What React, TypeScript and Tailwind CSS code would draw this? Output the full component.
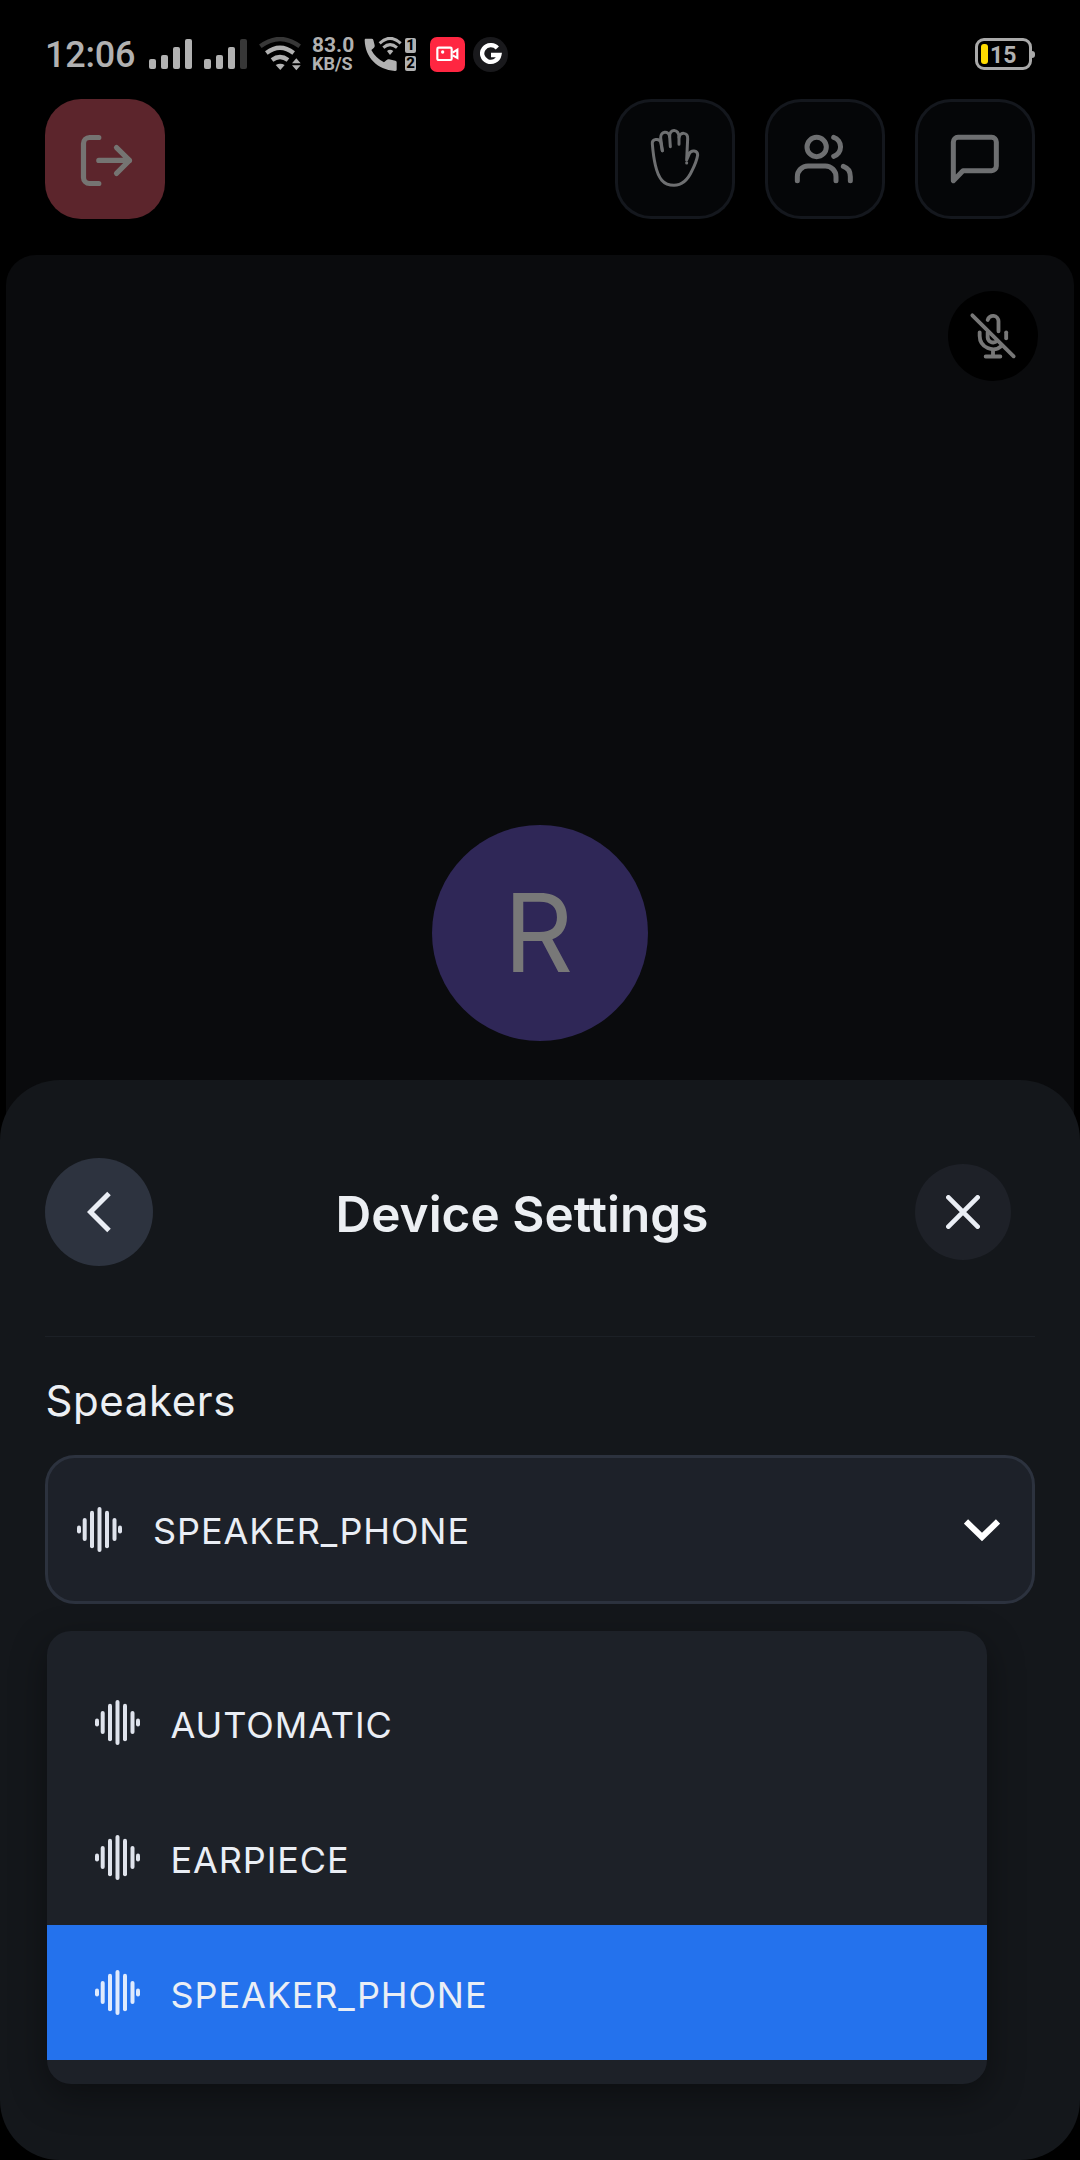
import React from "react";

function SignalBars({ weak }: { weak?: boolean }) {
  return (
    <svg width="43" height="30" viewBox="0 0 43 30" fill="#b1b1b1">
      <rect x="0" y="20" width="7" height="10" rx="2" />
      <rect x="12" y="16" width="7" height="14" rx="2" />
      <rect x="24" y="8" width="7" height="22" rx="2" />
      <rect x="36" y="0" width="7" height="30" rx="2" fill={weak ? "#373737" : "#b1b1b1"} />
    </svg>
  );
}

function WifiIcon() {
  return (
    <svg width="42" height="34" viewBox="0 0 126 102" fill="none" strokeWidth="13">
      <path d="M4 28 Q63 -16 122 28" stroke="#373737" />
      <path d="M22 48 Q63 17 104 48" stroke="#b1b1b1" />
      <path d="M39 69 Q63 51 87 69" stroke="#b1b1b1" />
      <path d="M50 84 Q64 76 77 84 L64 99Z" fill="#b1b1b1" />
      <path d="M99 79 L112 64 L125 79Z M99 85 H125 L112 100Z" fill="#b1b1b1" />
    </svg>
  );
}

function WifiCallIcon() {
  return (
    <svg width="39" height="34" viewBox="340 51 117 102" fill="none">
      <path
        d="M347 56 H366 Q370 56 371 60 L375 76 Q376 80 373 83 L365 90 Q377 113 403 127 L411 120 Q414 117 418 118 L437 122 Q441 123 441 127 V149 Q441 153 436 153 C382 149 347 113 345 61 Q345 56 347 56Z"
        fill="#b1b1b1"
      />
      <path d="M390 70 Q421 40 453 70" stroke="#b1b1b1" strokeWidth="9" />
      <path d="M401 83 Q421 65 442 83" stroke="#b1b1b1" strokeWidth="9" />
      <path d="M412 93 Q421 86 431 93 L421 105Z" fill="#b1b1b1" />
    </svg>
  );
}

function StatusBar() {
  return (
    <div className="flex h-[99px] shrink-0 items-start px-[45px] pt-9 font-['Roboto',sans-serif] text-[#b1b1b1]">
      <div className="flex h-9 items-center">
        <span className="w-[104px] pt-0.5 text-[36px] font-medium leading-9 tracking-[-0.25px]">12:06</span>
        <SignalBars />
        <div className="w-3" />
        <SignalBars weak />
        <div className="w-3" />
        <WifiIcon />
        <div className="ml-[11px] flex h-9 w-[42px] flex-col text-[21px] font-bold leading-[19px]">
          <span>83.0</span>
          <span className="text-[18px] leading-[17px]">KB/S</span>
        </div>
        <div className="w-[9px]" />
        <WifiCallIcon />
        <div className="ml-[3px] flex flex-col gap-[3px] text-[15px] font-extrabold leading-[15px] text-black">
          <span className="flex h-[15px] w-[11px] items-center justify-center rounded-[2px] bg-[#b1b1b1]">1</span>
          <span className="flex h-[15px] w-[11px] items-center justify-center rounded-[2px] bg-[#b1b1b1]">2</span>
        </div>
        <div className="ml-[14px] flex h-[35px] w-[35px] items-center justify-center rounded-[7px] bg-[#ff2641]">
          <svg width="23" height="16" viewBox="0 0 69 48" fill="none" stroke="#fff" strokeWidth="6.500">
            <rect x="4" y="5" width="43" height="37" rx="4" />
            <path d="M50 20 L64 11 V36 L50 28" />
            <circle cx="20" cy="18" r="5" fill="#fff" stroke="none" />
          </svg>
        </div>
        <div className="ml-2 flex h-[35px] w-[35px] items-center justify-center rounded-full bg-[#19191c]">
          <svg width="22" height="22" viewBox="0 0 66 66" fill="none" stroke="#fff" strokeWidth="13">
            <path d="M52 15 A26 25 0 1 0 58 36 H33" />
          </svg>
        </div>
      </div>
      <div className="ml-auto mt-0.5 flex items-center">
        <div className="flex h-8 w-[57px] items-center rounded-[9px] border-[3px] border-[#a9a9a9] pl-[3px]">
          <div className="h-5 w-[7px] rounded-[3px] bg-[#ffdc00]" />
          <span className="ml-[2px] mt-[3px] text-[23px] font-bold leading-6">15</span>
        </div>
        <div className="h-[7px] w-[3px] rounded-r-full bg-[#a9a9a9]" />
      </div>
    </div>
  );
}

function ToolButton({ children }: { children: React.ReactNode }) {
  return (
    <button className="h-[120px] w-[120px] rounded-[36px] bg-[#050608] shadow-[inset_0_0_0_3px_#14171d]">
      {children}
    </button>
  );
}

function Toolbar() {
  return (
    <div className="flex items-center justify-between px-[45px]">
      <button className="h-[120px] w-[120px] rounded-[36px] bg-[#5c252c]">
        <svg
          width="120"
          height="120"
          viewBox="0 0 120 120"
          fill="none"
          stroke="#757472"
          strokeWidth="5.200"
          strokeLinecap="round"
          strokeLinejoin="round"
        >
          <path d="M53.8 38.5 H44.5 A6 6 0 0 0 38.5 44.5 V78.5 A6 6 0 0 0 44.5 84.5 H53.8" />
          <path d="M53.8 61.4 H84.5 M71.5 48.6 L84.5 61.4 L71.5 74.4" />
        </svg>
      </button>
      <div className="flex gap-[30px]">
        <ToolButton>
          <svg
            width="120"
            height="120"
            viewBox="45 57 360 360"
            fill="none"
            stroke="#6e6f71"
            strokeWidth="9"
            strokeLinecap="round"
            strokeLinejoin="round"
          >
            <path d="M187 212 L182 186 C178 174 155 176 157 192 C159 216 162 238 166 255 C175 295 190 316 222 316 C252 316 266 294 276 272 C285 254 291 238 293 225 C293 210 273 209 268 221 L260 240 L263 176 C264 156 240 155 237 172 V193" />
            <path d="M187 212 L182 174 C181 153 206 150 209 170 L211 200" />
            <path d="M209 170 C207 145 238 145 237 172" />
            <path d="M260 248 V249" />
          </svg>
        </ToolButton>
        <ToolButton>
          <svg
            width="120"
            height="120"
            viewBox="495 57 360 360"
            fill="none"
            stroke="#6e6f71"
            strokeWidth="15"
            strokeLinecap="round"
          >
            <circle cx="650" cy="201" r="29" />
            <path d="M701 172 A30 30 0 0 1 701 229" />
            <path d="M592 302 V290 A32 32 0 0 1 624 258 H676 A32 32 0 0 1 708 290 V302" />
            <path d="M730 259 Q751 266 751 290 V302" />
          </svg>
        </ToolButton>
        <ToolButton>
          <svg
            width="120"
            height="120"
            viewBox="945 57 360 360"
            fill="none"
            stroke="#6e6f71"
            strokeWidth="15"
            strokeLinecap="round"
            strokeLinejoin="round"
          >
            <path d="M1060 302 V186 A14 14 0 0 1 1074 172 H1175 A14 14 0 0 1 1189 186 V258 A14 14 0 0 1 1175 272 H1089Z" />
          </svg>
        </ToolButton>
      </div>
    </div>
  );
}

function ParticipantTile() {
  return (
    <div className="relative mx-[6px] mt-9 flex h-[1356px] items-center justify-center rounded-[30px] bg-[#0a0b0d]">
      <div className="absolute right-9 top-9 h-[90px] w-[90px] rounded-full bg-black">
        <svg
          width="90"
          height="90"
          viewBox="1044 633 270 270"
          fill="none"
          stroke="#777"
          strokeWidth="11.500"
          strokeLinecap="round"
        >
          <path d="M1117 706 L1241 829" />
          <path d="M1163 720 A16.500 16.500 0 0 1 1195.500 724 V754" />
          <path d="M1163 757 V772 A16.500 16.500 0 0 0 1188 785" />
          <path d="M1139 757 V768 A40 40 0 0 0 1206 797" />
          <path d="M1218.500 757 V775" />
          <path d="M1179 809 V829 M1157 829.500 H1201" />
        </svg>
      </div>
      <div className="flex h-[216px] w-[216px] items-center justify-center rounded-full bg-[#2f2757]">
        <span className="mr-[3px] text-[108px] leading-none text-[#787878]">R</span>
      </div>
    </div>
  );
}

function WaveIcon() {
  return (
    <svg className="shrink-0" width="45" height="45" viewBox="0 0 45 45" fill="currentColor">
      <rect x="0" y="18.500" width="4" height="8" rx="2" />
      <rect x="5.700" y="11" width="4" height="23" rx="2" />
      <rect x="13" y="3.700" width="4" height="37.600" rx="2" />
      <rect x="20.500" y="0" width="4" height="45" rx="2" />
      <rect x="28" y="3.700" width="4" height="37.600" rx="2" />
      <rect x="35.500" y="11" width="4" height="23" rx="2" />
      <rect x="41" y="18.500" width="4" height="8" rx="2" />
    </svg>
  );
}

const devices = [
  { name: "AUTOMATIC", selected: false },
  { name: "EARPIECE", selected: false },
  { name: "SPEAKER_PHONE", selected: true },
];

function SettingsSheet() {
  return (
    <div className="absolute inset-x-0 bottom-0 h-[1080px] rounded-[60px] bg-[#14171b] px-[45px] pt-[78px] text-[#eaeef5]">
      <div className="flex h-[108px] items-center justify-between pr-6">
        <button className="flex h-[108px] w-[108px] items-center justify-center rounded-full bg-[#2d333f]">
          <svg width="24" height="42" viewBox="0 0 24 42" fill="none" stroke="currentColor" strokeWidth="5">
            <path d="M22 2.500 L3.500 21 L22 39.500" />
          </svg>
        </button>
        <h1 className="mr-6 mt-[5px] text-[49.5px] font-semibold leading-none text-[#eceff3]">Device Settings</h1>
        <button className="flex h-24 w-24 items-center justify-center rounded-full bg-[#1e2128]">
          <svg
            width="34"
            height="34"
            viewBox="0 0 34 34"
            fill="none"
            stroke="currentColor"
            strokeWidth="4.700"
            strokeLinecap="round"
          >
            <path d="M2.400 2.400 L31.600 31.600 M31.600 2.400 L2.400 31.600" />
          </svg>
        </button>
      </div>
      <div className="mt-[70px] h-px bg-[#1c2026]" />
      <h2 className="ml-[0.5px] mt-[41px] text-[42px] leading-[46px] tracking-[0.6px] text-[#eceff3]">Speakers</h2>
      <button className="mt-[31px] flex h-[149px] w-full items-center rounded-[30px] border-[3px] border-[#2c323e] bg-[#1d2129] pl-[29px] pr-[32px]">
        <span className="text-[#dfe3ec]">
          <WaveIcon />
        </span>
        <span className="ml-[31px] mt-0.5 text-[36px] leading-none tracking-[0.9px]">SPEAKER_PHONE</span>
        <svg className="ml-auto mt-px" width="36" height="23" viewBox="0 0 36 23" fill="none" stroke="#fff" strokeWidth="6">
          <path d="M2 2.500 L18 18 L34 2.500" />
        </svg>
      </button>
      <ul className="ml-[2px] mt-[27px] w-[940px] rounded-3xl bg-[#1d2128] py-6 shadow-[0_12px_36px_rgba(0,0,0,0.38)]">
        {devices.map((d) => (
          <li
            key={d.name}
            className={d.selected ? "flex h-[135px] items-center bg-[#2472ed] pl-12" : "flex h-[135px] items-center pl-12"}
          >
            <span className={d.selected ? "text-[#dfeafd]" : "text-[#dfe3ec]"}>
              <WaveIcon />
            </span>
            <span className="ml-[30.5px] mt-[5px] text-[36px] leading-none tracking-[0.9px]">{d.name}</span>
          </li>
        ))}
      </ul>
    </div>
  );
}

export default function App() {
  return (
    <div className="relative flex h-[2160px] w-[1080px] flex-col overflow-hidden bg-black font-['Inter',sans-serif]">
      <StatusBar />
      <Toolbar />
      <ParticipantTile />
      <SettingsSheet />
    </div>
  );
}
